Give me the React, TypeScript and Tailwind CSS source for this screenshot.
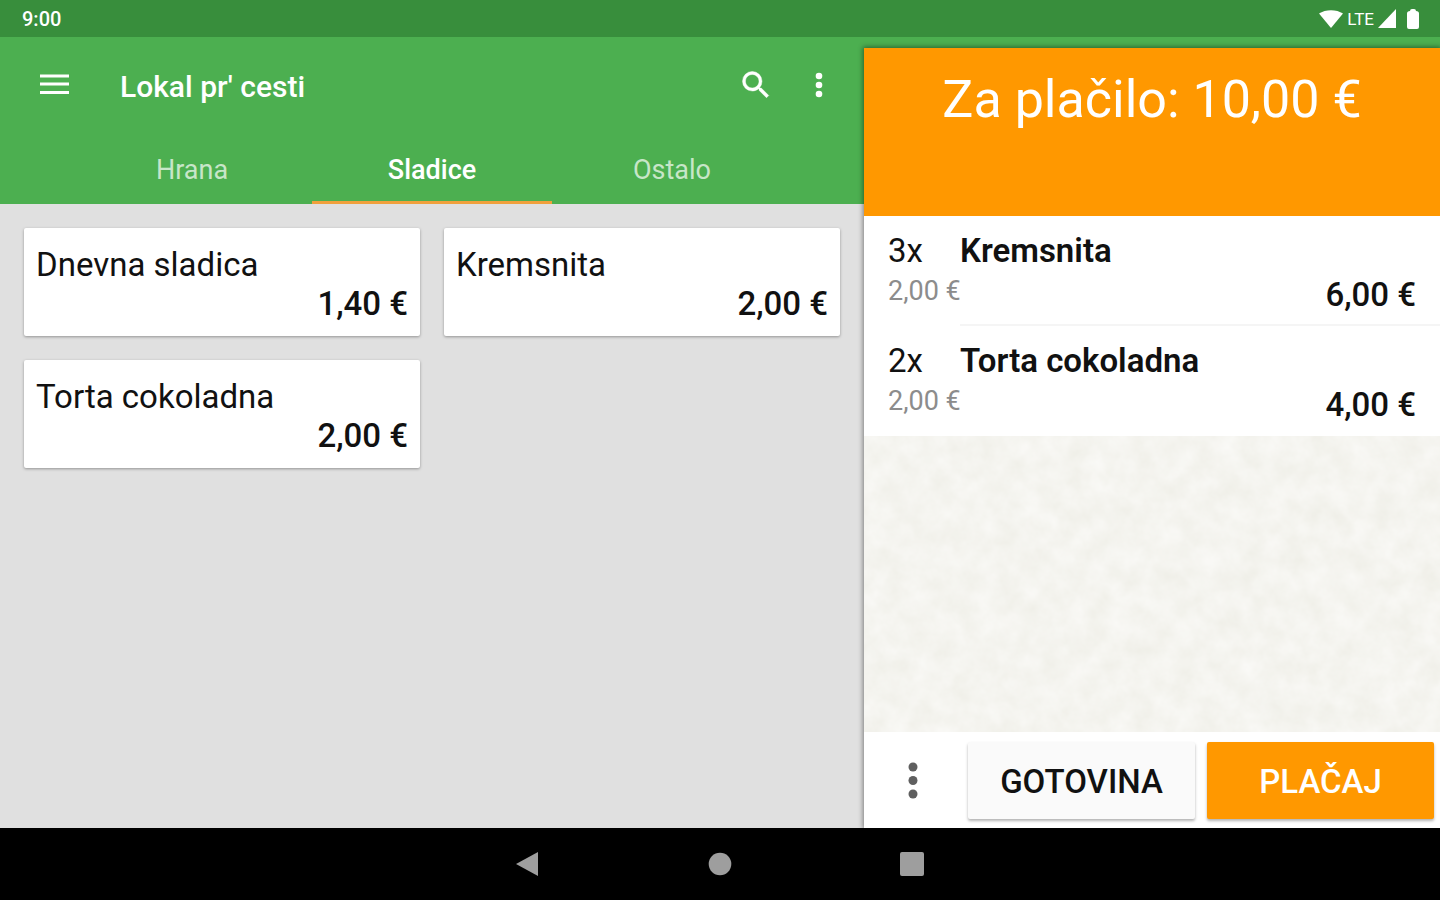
type Product = { name: string; price: string };
type OrderLine = { qty: string; unit: string; name: string; total: string };

const tabs = ["Hrana", "Sladice", "Ostalo"];

const products: Product[] = [
  { name: "Dnevna sladica", price: "1,40 €" },
  { name: "Kremsnita", price: "2,00 €" },
  { name: "Torta cokoladna", price: "2,00 €" },
];

const order: OrderLine[] = [
  { qty: "3x", unit: "2,00 €", name: "Kremsnita", total: "6,00 €" },
  { qty: "2x", unit: "2,00 €", name: "Torta cokoladna", total: "4,00 €" },
];

function StatusBar() {
  return (
    <div className="flex h-[37px] items-center justify-between bg-[#388e3c] pr-[21px] pl-[22px] text-white">
      <span className="text-[20px] leading-6 font-medium">9:00</span>
      <div className="flex items-center">
        <svg width="24" height="20" viewBox="0 0 24 20" fill="currentColor" aria-hidden="true">
          <path d="M0 4.500C6.500 0 17.500 0 24 4.500L12 19Z" />
        </svg>
        <span className="ml-1 text-[17px] leading-5">LTE</span>
        <svg className="ml-1" width="18" height="19" viewBox="0 0 18 19" fill="currentColor" aria-hidden="true">
          <path d="M18 0V19H0Z" />
        </svg>
        <svg className="ml-[11px]" width="12" height="20" viewBox="0 0 12 20" fill="currentColor" aria-hidden="true">
          <path d="M3 2Q3 0 5 0H7Q9 0 9 2Q12 2 12 4.500V18Q12 20 10 20H2Q0 20 0 18V4.500Q0 2 3 2Z" />
        </svg>
      </div>
    </div>
  );
}

function Header() {
  return (
    <header className="bg-[#4caf50] text-white">
      <div className="flex h-[96px] items-center pr-[27px] pl-[36px]">
        <button type="button" aria-label="Meni" className="flex size-[36px] items-center justify-center">
          <svg width="30" height="22" viewBox="0 0 30 22" fill="currentColor" aria-hidden="true">
            <path d="M1 0.500H30V3.500H1ZM1 8.500H30V11.500H1ZM1 17H30V20H1Z" />
          </svg>
        </button>
        <h1 className="ml-12 pt-[3px] text-[30px] leading-8 font-medium">Lokal pr' cesti</h1>
        <button type="button" aria-label="Iskanje" className="ml-auto flex size-[36px] items-center justify-center">
          <svg width="36" height="36" viewBox="0 0 24 24" fill="currentColor" stroke="currentColor" strokeWidth="0.300" aria-hidden="true">
            <path d="M15.500 14h-.79l-.28-.27A6.471 6.471 0 0 0 16 9.500 6.500 6.500 0 1 0 9.500 16c1.610 0 3.090-.59 4.230-1.570l.27.28v.79l5 4.990L20.490 19l-4.990-5zm-6 0C7.010 14 5 11.990 5 9.500S7.010 5 9.500 5 14 7.010 14 9.500 11.990 14 9.500 14z" />
          </svg>
        </button>
        <button type="button" aria-label="Več možnosti" className="ml-[27px] flex size-[36px] items-center justify-center">
          <svg width="36" height="36" viewBox="0 0 24 24" fill="currentColor" aria-hidden="true">
            <circle cx="12" cy="6" r="2.200" />
            <circle cx="12" cy="12" r="2.200" />
            <circle cx="12" cy="18" r="2.200" />
          </svg>
        </button>
      </div>
      <div role="tablist" className="mx-auto grid w-5/6 grid-cols-3">
        {tabs.map((tab) => (
          <button
            key={tab}
            type="button"
            role="tab"
            aria-selected={tab === "Sladice"}
            className={
              tab === "Sladice"
                ? "h-[71px] border-b-3 border-[#f0a03c] pt-[5px] text-[27px] leading-8 font-medium"
                : "h-[71px] border-b-3 border-transparent pt-[5px] text-[27px] leading-8 text-white/70"
            }
          >
            {tab}
          </button>
        ))}
      </div>
    </header>
  );
}

function ProductCard({ name, price }: Product) {
  return (
    <button
      type="button"
      className="flex h-[108px] flex-col rounded-xs bg-white px-3 pt-[17px] text-[#111] shadow-[0_1px_3px_rgba(0,0,0,0.35)]"
    >
      <span className="text-left text-[33px] leading-[39px]">{name}</span>
      <span className="self-end text-[33px] leading-[39px] font-medium">{price}</span>
    </button>
  );
}

function PaperTexture() {
  return (
    <div className="relative flex-1 overflow-hidden bg-[#f5f4f0]">
      <svg className="absolute inset-0 size-full" aria-hidden="true">
        <filter id="paper" x="0" y="0" width="100%" height="100%" colorInterpolationFilters="sRGB">
          <feTurbulence type="fractalNoise" baseFrequency="0.045" numOctaves="4" seed="7" />
          <feColorMatrix values="0.05 0 0 0 0.934  0.05 0 0 0 0.932  0.07 0 0 0 0.903  0 0 0 0 1" />
        </filter>
        <rect width="100%" height="100%" filter="url(#paper)" />
      </svg>
    </div>
  );
}

function OrderPanel() {
  return (
    <aside className="relative z-10 flex flex-1 flex-col bg-white shadow-[0_0_5px_1px_rgba(0,0,0,0.45)]">
      <div className="h-[168px] bg-[#ff9800] pt-[21px] text-center text-[52px] leading-[62px] text-white">
        Za plačilo: 10,00 €
      </div>
      <ul className="text-[#111]">
        {order.map((line, i) => (
          <li key={line.name} className="flex pl-6">
            <div className="w-[72px] shrink-0 pt-[15px]">
              <div className="text-[33px] leading-[39px]">{line.qty}</div>
              <div className="text-[27px] leading-[42px] whitespace-nowrap text-[#8c8c8c]">{line.unit}</div>
            </div>
            <div
              className={
                i === 0
                  ? "flex h-[110px] flex-1 flex-col border-b-2 border-[#f5f5f5] pt-[15px] pr-6"
                  : "flex h-[110px] flex-1 flex-col pt-[15px] pr-6"
              }
            >
              <div className="text-[33px] leading-[39px] font-semibold">{line.name}</div>
              <div className="text-right text-[33px] leading-[49px] font-medium">{line.total}</div>
            </div>
          </li>
        ))}
      </ul>
      <PaperTexture />
      <div className="flex h-[96px] items-center pr-[6px]">
        <button type="button" aria-label="Možnosti računa" className="flex h-full w-[97px] shrink-0 items-center justify-center text-[#5f5f5f]">
          <svg width="12" height="38" viewBox="0 0 12 38" fill="currentColor" aria-hidden="true">
            <circle cx="6" cy="6" r="4.500" />
            <circle cx="6" cy="19.500" r="4.500" />
            <circle cx="6" cy="33" r="4.500" />
          </svg>
        </button>
        <div className="grid flex-1 grid-cols-2 gap-3 pl-[7px] text-[33px] leading-10 font-medium">
          <button type="button" className="h-[77px] rounded-xs bg-[#fafafa] pt-[3px] text-[#111] shadow-[0_2px_3px_rgba(0,0,0,0.3)]">
            GOTOVINA
          </button>
          <button type="button" className="h-[77px] rounded-xs bg-[#ff9800] pt-[3px] text-white shadow-[0_2px_3px_rgba(0,0,0,0.3)]">
            PLAČAJ
          </button>
        </div>
      </div>
    </aside>
  );
}

function NavigationBar() {
  return (
    <nav className="flex h-[72px] items-center justify-center bg-black text-[#9e9e9e]">
      <div className="flex w-[408px] items-center justify-between">
        <button type="button" aria-label="Nazaj">
          <svg width="24" height="26" viewBox="0 0 24 26" fill="currentColor" aria-hidden="true">
            <path d="M22 1V25L0 13Z" />
          </svg>
        </button>
        <button type="button" aria-label="Domov">
          <svg width="24" height="24" viewBox="0 0 24 24" fill="currentColor" aria-hidden="true">
            <circle cx="12" cy="12" r="11.300" />
          </svg>
        </button>
        <button type="button" aria-label="Nedavno">
          <svg width="24" height="24" viewBox="0 0 24 24" fill="currentColor" aria-hidden="true">
            <rect width="24" height="24" rx="2" />
          </svg>
        </button>
      </div>
    </nav>
  );
}

export default function App() {
  return (
    <div className="flex min-h-screen flex-col bg-[#e0e0e0] font-['Roboto',sans-serif]">
      <StatusBar />
      <div className="grid flex-1 grid-cols-[3fr_2fr]">
        <main>
          <Header />
          <div className="grid grid-cols-2 gap-6 p-6">
            {products.map((p) => (
              <ProductCard key={p.name} {...p} />
            ))}
          </div>
        </main>
        <div className="flex flex-col bg-[#4caf50] pt-[11px]">
          <OrderPanel />
        </div>
      </div>
      <NavigationBar />
    </div>
  );
}
